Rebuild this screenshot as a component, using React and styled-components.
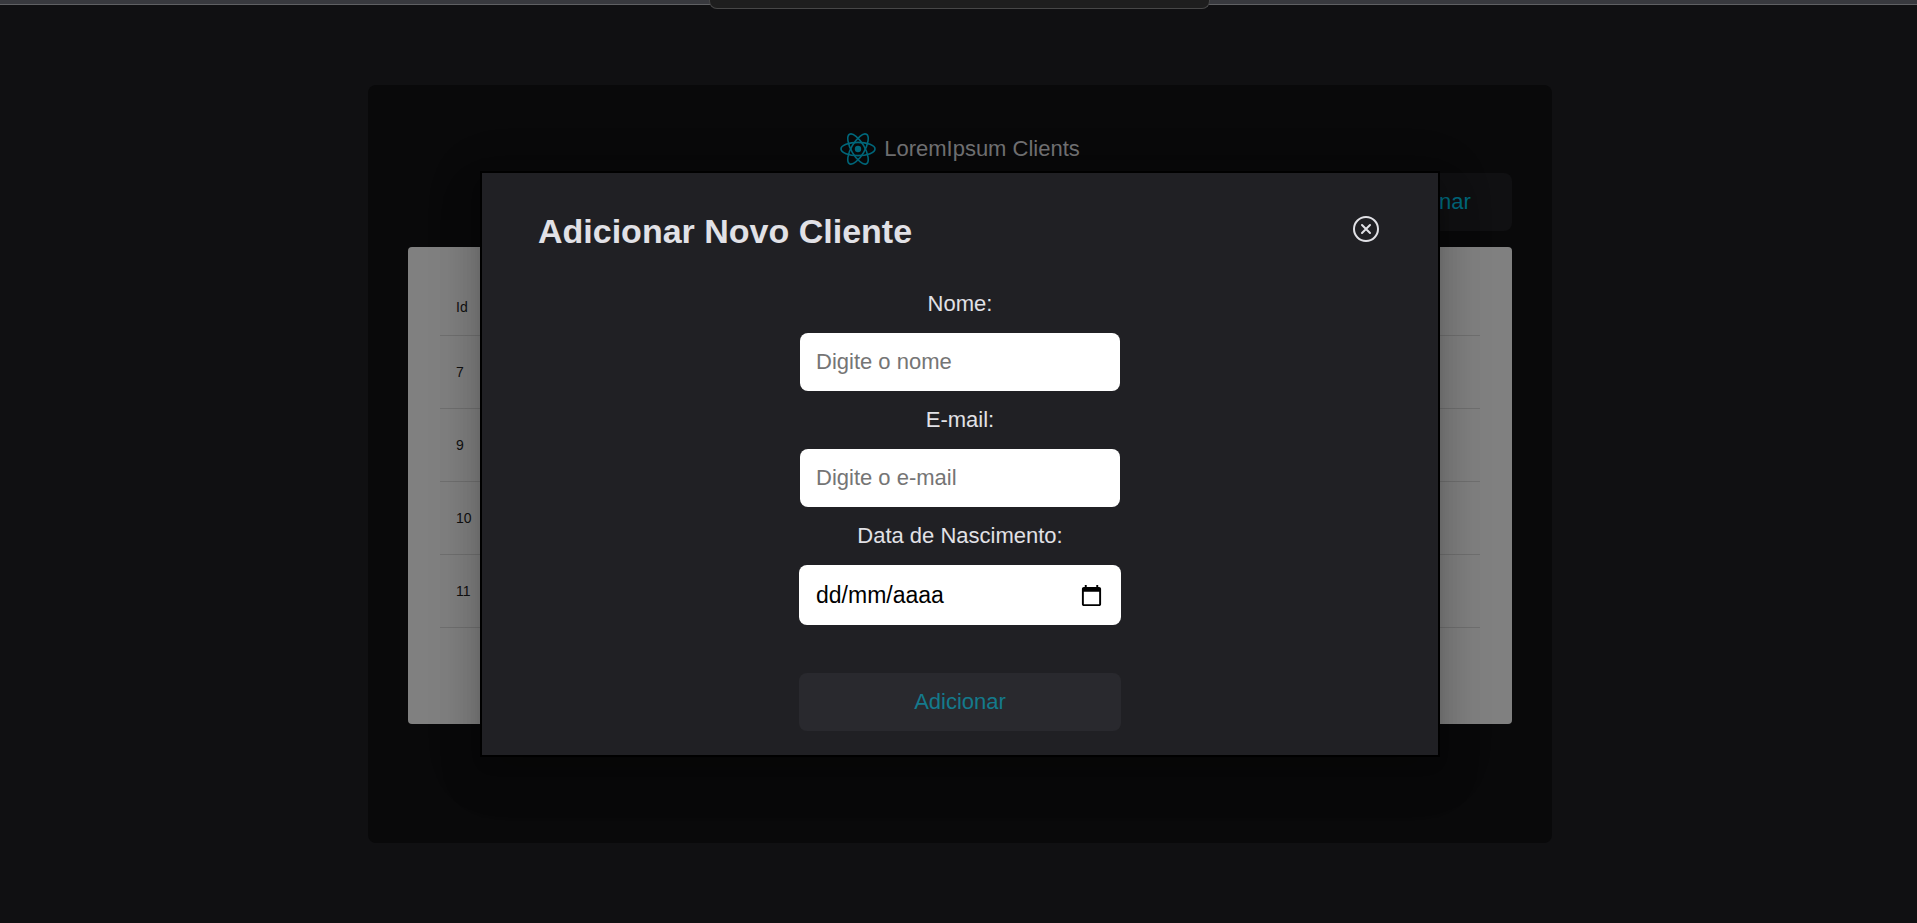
import React from 'react';
import styled, { createGlobalStyle } from 'styled-components';

const GlobalStyle = createGlobalStyle`
  * { box-sizing: border-box; }
  body {
    margin: 0;
    background: #101012;
    color: #e1e1e6;
    font-family: "Liberation Sans", Arial, sans-serif;
    font-size: 22px;
  }
  button, input { font: inherit; }
`;

const Page = styled.div`
  min-height: 100vh;
  display: flex;
  flex-direction: column;
`;

const TopBar = styled.div`
  height: 5px;
  padding-left: 2px;
  background: #38393e;
  border-bottom: 1px solid #5f6063;
  display: flex;
  justify-content: center;
`;

const TopTab = styled.div`
  position: relative;
  width: 501px;
  height: 9px;
  flex: none;
  background: #1e1e1e;
  border: 1px solid #474747;
  border-top: 0;
  border-radius: 0 0 8px 8px;
`;

const Stage = styled.div`
  flex: 1;
  display: grid;
  place-items: center;
  padding-left: 3px;
`;

const Panel = styled.main`
  grid-area: 1 / 1;
  width: 90%;
  max-width: 1184px;
  min-height: 758px;
  padding: 40px;
  border-radius: 8px;
  background: #09090a;
  display: flex;
  flex-direction: column;
`;

const Brand = styled.header`
  display: flex;
  align-items: center;
  justify-content: center;
  gap: 8px;
  height: 48px;
  color: #717173;
`;

const Toolbar = styled.div`
  display: flex;
  justify-content: flex-end;
  margin-bottom: 16px;
`;

const Button = styled.button`
  width: ${({ $wide }) => ($wide ? '322px' : '174px')};
  height: 58px;
  border: 0;
  border-radius: 8px;
  background: ${({ $wide }) => ($wide ? '#29292e' : '#101012')};
  color: ${({ $wide }) => ($wide ? '#147a8c' : '#00697d')};
`;

const TableCard = styled.section`
  min-height: 477px;
  padding: 32px;
  border-radius: 4px;
  background: #808080;
`;

const Table = styled.table`
  width: 100%;
  border-collapse: separate;
  border-spacing: 0;
  font-size: 14px;
  color: #101010;
`;

const Cell = styled.td`
  height: ${({ as }) => (as ? '57px' : '73px')};
  padding: 0 16px;
  border-bottom: 1px solid #707070;
  text-align: left;
  font-weight: 400;
`;

const Modal = styled.section`
  grid-area: 1 / 1;
  position: relative;
  width: 80%;
  max-width: 960px;
  padding: 32px 56px 24px;
  border: 2px solid #000;
  background: #202024;
  box-shadow:
    0 11px 15px -7px rgba(0, 0, 0, 0.2),
    0 24px 38px 3px rgba(0, 0, 0, 0.14),
    0 9px 46px 8px rgba(0, 0, 0, 0.12);
`;

const ModalHeader = styled.div`
  display: flex;
  align-items: flex-start;
  justify-content: space-between;
  padding: 6px 0 8px;
`;

const Title = styled.h2`
  margin: 0;
  font-size: 34px;
  line-height: 40px;
`;

const CloseButton = styled.button`
  display: flex;
  padding: 2px 0;
  border: 0;
  background: none;
  color: #e1e1e6;
`;

const Form = styled.form`
  display: flex;
  flex-direction: column;
  align-items: center;
  padding-top: 32px;
`;

const Label = styled.label`
  line-height: 26px;
  margin-bottom: 16px;
`;

const Input = styled.input`
  width: 320px;
  height: 58px;
  margin-bottom: 16px;
  padding: 0 16px;
  border: 0;
  border-radius: 8px;
  background: #fff;
  color: #000;
  &::placeholder { color: #757575; }
`;

const DateField = styled.div`
  display: flex;
  align-items: center;
  width: 322px;
  height: 60px;
  margin-bottom: 48px;
  padding: 0 18px 0 17px;
  border-radius: 8px;
  background: #fff;
`;

const DateInput = styled.input`
  flex: 1;
  min-width: 0;
  padding: 0;
  border: 0;
  outline: 0;
  background: none;
  color: #000;
  font-size: 23px;
  &::placeholder { color: #000; }
`;

const ReactLogo = () => (
  <svg width="36" height="36" viewBox="-18 -18 36 36" fill="none" stroke="#00697d" strokeWidth="1.6" aria-hidden="true">
    <circle r="3.2" fill="#00697d" stroke="none" />
    <ellipse rx="17" ry="6.6" />
    <ellipse rx="17" ry="6.6" transform="rotate(60)" />
    <ellipse rx="17" ry="6.6" transform="rotate(120)" />
  </svg>
);

const CloseIcon = () => (
  <svg width="32" height="32" viewBox="0 0 256 256" fill="none" stroke="currentColor" strokeWidth="16" strokeLinecap="round" strokeLinejoin="round" aria-hidden="true">
    <circle cx="128" cy="128" r="96" />
    <path d="M160 96 96 160M160 160 96 96" />
  </svg>
);

const CalendarIcon = () => (
  <svg width="23" height="23" viewBox="0 0 24 24" aria-hidden="true">
    <path d="M20 3h-1V1h-2v2H7V1H5v2H4c-1.100 0-2 .9-2 2v16c0 1.100.9 2 2 2h16c1.100 0 2-.9 2-2V5c0-1.100-.9-2-2-2zm0 18H4V8h16v13z" />
  </svg>
);

const clientIds = [7, 9, 10, 11];

export default function App() {
  return (
    <Page>
      <GlobalStyle />
      <TopBar><TopTab /></TopBar>
      <Stage>
        <Panel>
          <Brand><ReactLogo />LoremIpsum Clients</Brand>
          <Toolbar><Button type="button">Adicionar</Button></Toolbar>
          <TableCard>
            <Table>
              <thead><tr><Cell as="th" scope="col">Id</Cell></tr></thead>
              <tbody>
                {clientIds.map((id) => <tr key={id}><Cell>{id}</Cell></tr>)}
              </tbody>
            </Table>
          </TableCard>
        </Panel>
        <Modal role="dialog" aria-labelledby="modal-title">
          <ModalHeader>
            <Title id="modal-title">Adicionar Novo Cliente</Title>
            <CloseButton type="button" aria-label="Fechar"><CloseIcon /></CloseButton>
          </ModalHeader>
          <Form>
            <Label htmlFor="name">Nome:</Label>
            <Input id="name" placeholder="Digite o nome" />
            <Label htmlFor="email">E-mail:</Label>
            <Input id="email" type="email" placeholder="Digite o e-mail" />
            <Label htmlFor="birth">Data de Nascimento:</Label>
            <DateField>
              <DateInput id="birth" placeholder="dd/mm/aaaa" />
              <CalendarIcon />
            </DateField>
            <Button $wide type="submit">Adicionar</Button>
          </Form>
        </Modal>
      </Stage>
    </Page>
  );
}
